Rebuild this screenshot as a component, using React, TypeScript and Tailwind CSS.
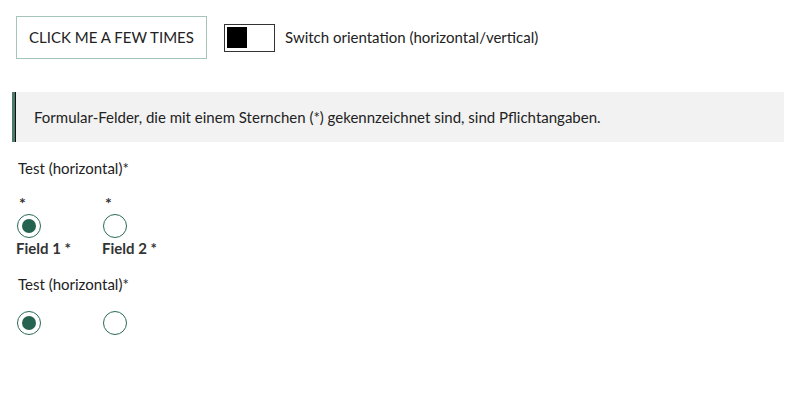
import { useState } from 'react';

const FONT = "font-['Lato','Liberation_Sans',sans-serif]";

// ── Radio ─────────────────────────────────────────────────────────────────────

function Radio({ checked }: { checked?: boolean }) {
  return (
    <span className="flex h-6 w-6 items-center justify-center rounded-full border border-[#2a6a55] bg-white">
      {checked && <span className="h-[14px] w-[14px] rounded-full bg-[#246350]" />}
    </span>
  );
}

// ── Radio group ───────────────────────────────────────────────────────────────

function Group({ labelled }: { labelled?: boolean }) {
  return (
    <div>
      <div className="pl-[18px] text-[15px] leading-5 text-[#222]">Test (horizontal)*</div>
      {labelled ? (
        <div className="mt-[19px] flex pl-4">
          {['Field 1', 'Field 2'].map((f, i) => (
            <div key={f} className="flex w-[86px] flex-col">
              <span className="pl-[3px] text-[16px] font-bold leading-3 text-[#333]">*</span>
              <span className="mt-[5px] pl-[1px]">
                <Radio checked={i === 0} />
              </span>
              <span className="text-[15px] font-bold leading-5 text-[#333]">{f} *</span>
            </div>
          ))}
        </div>
      ) : (
        <div className="mt-[17px] flex pl-[17px]">
          <span className="w-[86px]"><Radio checked /></span>
          <Radio />
        </div>
      )}
    </div>
  );
}

export default function App() {
  const [vertical, setVertical] = useState(false);

  return (
    <div className={`h-[402px] w-[800px] bg-white ${FONT}`}>
      <div className="flex items-center pl-4 pt-4">
        <button className="h-[43px] w-[191px] border border-[#a5c4ba] bg-white text-[15px] uppercase text-[#222]">
          Click me a few times
        </button>
        <button
          onClick={() => setVertical(!vertical)}
          className="ml-[17px] flex h-[28px] w-[51px] items-center border border-[#333] bg-white px-[2px]"
        >
          <span className="h-[21px] w-[20px] bg-black" />
        </button>
        <span className="ml-[10px] text-[15px] text-[#222]">Switch orientation (horizontal/vertical)</span>
      </div>

      <div className="ml-3 mr-4 mt-[33px] flex h-[50px] items-center border-l-[3px] border-[#4a7a6a] bg-[#f2f2f2] pl-[19px] text-[15px] text-[#222] shadow-[inset_1px_0_0_#111]">
        Formular-Felder, die mit einem Sternchen (*) gekennzeichnet sind, sind Pflichtangaben.
      </div>

      <div className="flex flex-col gap-[16px] pt-[16px]">
        <Group labelled />
        <Group />
      </div>
    </div>
  );
}
